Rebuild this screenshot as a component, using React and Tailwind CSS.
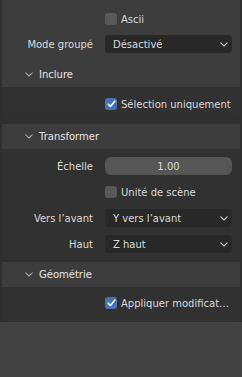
import React from 'react';

function Chevron({ className }) {
  return (
    <svg width="8" height="5" viewBox="0 0 8 5" className={className}>
      <path d="M0.8 0.8 L4 4 L7.2 0.8" fill="none" stroke="currentColor" strokeWidth="1.1" strokeLinecap="round" strokeLinejoin="round" />
    </svg>
  );
}

function Check({ checked, label }) {
  return (
    <div className="h-5 flex items-center pl-[103px]">
      {checked ? (
        <span className="w-[12px] h-[12px] rounded-[3px] bg-[#4772b3] flex items-center justify-center">
          <svg width="9" height="8" viewBox="0 0 9 8">
            <path d="M1.2 4.2 L3.4 6.4 L7.8 1.2" fill="none" stroke="#ffffff" strokeWidth="1.6" strokeLinecap="round" strokeLinejoin="round" />
          </svg>
        </span>
      ) : (
        <span className="w-[12px] h-[12px] rounded-[3px] bg-[#595959]" />
      )}
      <span className="ml-[4px] whitespace-nowrap">{label}</span>
    </div>
  );
}

function Row({ label, children }) {
  return (
    <div className="h-5 flex items-center">
      <span className="w-[92px] text-right pr-[1px] whitespace-nowrap">{label}</span>
      <div className="ml-[11px] w-[127px]">{children}</div>
    </div>
  );
}

function Select({ value }) {
  return (
    <div className="h-[18px] rounded-[4px] bg-[#282828] flex items-center justify-between pl-[8px] pr-[4px]">
      <span>{value}</span>
      <Chevron className="text-[#d0d0d0]" />
    </div>
  );
}

function Header({ title }) {
  return (
    <div className="h-[25px] flex items-center bg-[#3d3d3d] pl-[23px] text-[#e6e6e6]">
      <Chevron className="text-[#a8a8a8]" />
      <span className="ml-[6px]">{title}</span>
    </div>
  );
}

export default function App() {
  return (
    <div className="w-[242px] h-[377px] bg-[#424242] text-[10px] text-[#dadada] font-['DejaVu_Sans',sans-serif] overflow-hidden">
      <div className="bg-[#2f2f2f] px-[2px]">
        <div className="bg-[#3d3d3d] pt-[9px] pb-[8px] flex flex-col gap-[5px]">
          <Check label="Ascii" />
          <Row label="Mode groupé">
            <Select value="Désactivé" />
          </Row>
        </div>
        <Header title="Inclure" />
        <div className="bg-[#313131] rounded-b-[4px] pt-[7px] pb-[4px]">
          <Check checked label="Sélection uniquement" />
        </div>
        <div className="h-[6px]" />
        <Header title="Transformer" />
        <div className="bg-[#313131] rounded-b-[4px] pt-[7px] pb-[6px] flex flex-col gap-[6px]">
          <Row label="Échelle">
            <div className="h-[18px] rounded-[6px] bg-[#565656] flex items-center justify-center">1.00</div>
          </Row>
          <Check label="Unité de scène" />
          <Row label="Vers l’avant">
            <Select value="Y vers l’avant" />
          </Row>
          <Row label="Haut">
            <Select value="Z haut" />
          </Row>
        </div>
        <div className="h-[2px]" />
        <Header title="Géométrie" />
        <div className="bg-[#313131] rounded-b-[4px] pt-[6px] pb-[9px]">
          <Check checked label="Appliquer modificat…" />
        </div>
      </div>
    </div>
  );
}
